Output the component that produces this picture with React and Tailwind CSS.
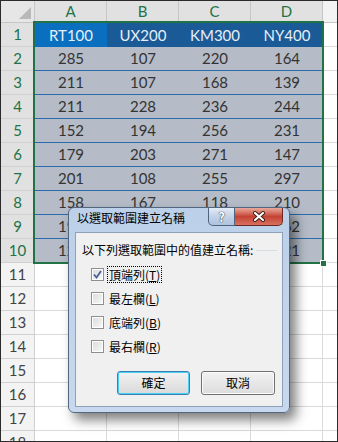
import React from 'react'

const data = [
  ['285', '107', '220', '164'],
  ['211', '107', '168', '139'],
  ['211', '228', '236', '244'],
  ['152', '194', '256', '231'],
  ['179', '203', '271', '147'],
  ['201', '108', '255', '297'],
  ['158', '167', '118', '210'],
  ['192', '145', '187', '262'],
  ['121', '176', '133', '221'],
]

const heads = ['RT100', 'UX200', 'KM300', 'NY400']
const cols = ['A', 'B', 'C', 'D']

const Checkbox = ({ checked }) => (
  <span className="w-[13px] h-[13px] border border-[#8f8f8f] bg-white p-[1px] flex">
    <span className="flex-1 bg-gradient-to-br from-[#dcdcdc] to-[#f7f7f7] flex items-center justify-center">
      {checked && (
        <svg width="9" height="9" viewBox="0 0 9 9">
          <path d="M1 4.5 L3.5 7.5 L8 1" stroke="#4a5f97" strokeWidth="1.8" fill="none" />
        </svg>
      )}
    </span>
  </span>
)

const Option = ({ label, hot, checked, focus }) => (
  <div className="h-[24px] flex items-center pl-[15px] gap-[3px]">
    <Checkbox checked={checked} />
    <span className={`px-[1px] leading-[15px] border border-dotted ${focus ? 'border-black' : 'border-transparent'}`}>
      {label}(<span className="underline">{hot}</span>)
    </span>
  </div>
)

const NameDialog = () => (
  <div className="absolute left-[67px] top-[206px] w-[222px] h-[206px] rounded-[6px] border border-[#52677f] bg-gradient-to-b from-[#bcd0e9] to-[#c8d8ee] shadow-[6px_7px_12px_rgba(0,0,0,0.5)] flex flex-col font-['Noto_Sans_CJK_TC',sans-serif] text-[12px] text-black">
    <div className="h-[24px] flex items-start">
      <span className="pl-[8px] pt-[2px] leading-[16px] flex-1">以選取範圍建立名稱</span>
      <div className="flex mr-[6px]">
        <div className="w-[27px] h-[18px] border border-t-0 border-[#4e6580] rounded-bl-[5px] bg-gradient-to-b from-[#e3ebf6] via-[#c2d2e6] to-[#aec3de] flex items-center justify-center">
          <span className="text-white font-bold text-[13px] leading-none [text-shadow:0_0_1px_#1c2c44,0_0_1px_#1c2c44]">?</span>
        </div>
        <div className="w-[48px] h-[18px] border border-l-0 border-t-0 border-[#6a2a22] rounded-br-[5px] bg-gradient-to-b from-[#e8a99c] via-[#c44234] to-[#d8705f] flex items-center justify-center">
          <svg width="14" height="11" viewBox="0 0 14 11">
            <path d="M3 2 L11 9 M11 2 L3 9" stroke="#3a1a16" strokeWidth="4" strokeLinecap="round" />
            <path d="M3 2 L11 9 M11 2 L3 9" stroke="#ffffff" strokeWidth="2.2" strokeLinecap="round" />
          </svg>
        </div>
      </div>
    </div>
    <div className="flex-1 mx-[6px] mb-[5px] border border-[#8da1bd] bg-[#f0f0f0] flex flex-col">
      <div className="mt-[9px] pl-[6px] flex items-center h-[16px]">
        <span>以下列選取範圍中的值建立名稱:</span>
        <span className="flex-1 h-px bg-[#d5dde3] ml-[3px] mr-[5px]" />
      </div>
      <div className="mt-[4px] flex flex-col">
        <Option label="頂端列" hot="T" checked focus />
        <Option label="最左欄" hot="L" />
        <Option label="底端列" hot="B" />
        <Option label="最右欄" hot="R" />
      </div>
      <div className="mt-[13px] ml-[41px] flex gap-[11px]">
        <button className="w-[73px] h-[24px] rounded-[3px] border border-[#3c7fb1] shadow-[inset_0_0_0_1px_#48d0f7] bg-gradient-to-b from-[#f2f2f2] to-[#d9d9d9]">確定</button>
        <button className="w-[74px] h-[24px] rounded-[3px] border border-[#707070] shadow-[inset_0_0_0_1px_#fbfbfb] bg-gradient-to-b from-[#f2f2f2] to-[#dcdcdc]">取消</button>
      </div>
    </div>
  </div>
)

const App = () => {
  const rowNums = Array.from({ length: 18 }, (_, i) => i + 1)
  return (
    <div className="w-[338px] h-[442px] border border-[#2b2b2b] bg-white overflow-hidden relative font-['Lato',sans-serif] text-[15px]">
      <div className="flex h-[22px] border-b border-[#c6c6c6] bg-[#f3f3f3]">
        <div className="w-[34px] border-r border-[#c6c6c6] bg-[#e6e6e6] flex items-end justify-end p-[3px]">
          <span className="w-0 h-0 border-l-[12px] border-l-transparent border-b-[12px] border-b-[#b9b9b9]" />
        </div>
        {cols.map(c => (
          <div key={c} className="w-[72px] border-r border-[#c6c6c6] bg-[#e1e1e1] text-[#217346] flex items-center justify-center leading-none">{c}</div>
        ))}
        <div className="flex-1" />
      </div>
      {rowNums.map(n => {
        const sel = n <= 10
        return (
          <div key={n} className="flex h-[24px]">
            <div className={`w-[34px] border-r border-b border-[#d0d0d0] flex items-center justify-center leading-none ${sel ? 'bg-[#e1e1e1] text-[#217346]' : 'bg-[#f3f3f3] text-[#444444]'}`}>{n}</div>
            {n === 1 && heads.map((h, i) => (
              <div key={h} className={`w-[72px] flex items-center justify-center text-[#e8eef6] ${i === 0 ? 'bg-[#0b6fc0]' : 'bg-[#195a97]'}`}>{h}</div>
            ))}
            {n > 1 && sel && data[n - 2].map((v, i) => (
              <div key={i} className="w-[72px] border-b border-[#2a6bb0] bg-[#b5bcc7] flex items-center justify-center text-[#333333]">{v}</div>
            ))}
            {!sel && cols.map(c => (
              <div key={c} className="w-[72px] border-r border-b border-[#dadada]" />
            ))}
            <div className="flex-1 border-b border-[#dadada]" />
          </div>
        )
      })}
      <div className="absolute left-[32px] top-[20px] w-[291px] h-[243px] border-2 border-[#217346]" />
      <div className="absolute left-[319px] top-[259px] w-[7px] h-[7px] bg-[#217346] border border-white" />
      <NameDialog />
    </div>
  )
}

export default App
